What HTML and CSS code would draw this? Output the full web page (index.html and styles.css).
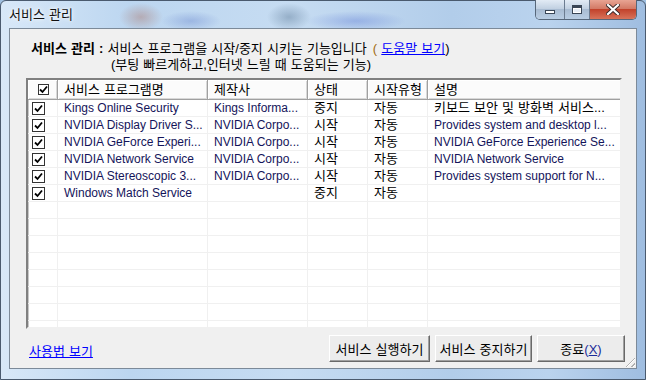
FILE: index.html
```html
<!DOCTYPE html>
<html lang="ko">
  <head>
    <meta charset="UTF-8" />
    <title>서비스 관리</title>
    <link rel="stylesheet" href="styles.css">
  </head>
  <body>
    <div class="window">
      <div class="titlebar">
        <span class="title">서비스 관리</span>
        <div class="caption">
          <span class="cap-btn cap-min"><i></i></span>
          <span class="cap-btn cap-max"><i></i></span>
          <span class="cap-btn cap-close">
            <svg width="14" height="11" viewBox="0 0 14 11">
              <path d="M2 1 L12 10 M12 1 L2 10" stroke="#3a2a2a" stroke-width="4" stroke-linecap="square" />
              <path d="M2 1 L12 10 M12 1 L2 10" stroke="#fff" stroke-width="2.2" stroke-linecap="square" />
            </svg>
          </span>
        </div>
      </div>

      <div class="client">
        <div class="intro">
          <p class="line"><b>서비스 관리 :</b> 서비스 프로그램을 시작/중지 시키는 기능입니다 <span class="paren">(</span> <a href="#">도움말 보기</a>)</p>
          <p class="line indent">(부팅 빠르게하고,인터넷 느릴 때 도움되는 기능)</p>
        </div>

        <div class="list">
          <table>
            <colgroup>
              <col class="c-check">
              <col class="c-name">
              <col class="c-maker">
              <col class="c-state">
              <col class="c-type">
              <col>
            </colgroup>
            <thead>
              <tr>
                <th class="check-cell"><span class="box box-head"><svg width="9" height="9" viewBox="0 0 9 9"><path d="M1 4.5 L3.5 7 L8 1.5" fill="none" stroke="#000" stroke-width="1.8" /></svg></span></th>
                <th>서비스 프로그램명</th>
                <th>제작사</th>
                <th>상태</th>
                <th>시작유형</th>
                <th>설명</th>
              </tr>
            </thead>
            <tbody>
              <tr>
                <td class="check-cell"><span class="box"><svg width="9" height="9" viewBox="0 0 9 9"><path d="M1 4.5 L3.5 7 L8 1.5" fill="none" stroke="#000" stroke-width="1.8" /></svg></span></td>
                <td>Kings Online Security</td>
                <td>Kings Informa...</td>
                <td class="ko">중지</td>
                <td class="ko">자동</td>
                <td class="ko">키보드 보안 및 방화벽 서비스...</td>
              </tr>
              <tr>
                <td class="check-cell"><span class="box"><svg width="9" height="9" viewBox="0 0 9 9"><path d="M1 4.5 L3.5 7 L8 1.5" fill="none" stroke="#000" stroke-width="1.8" /></svg></span></td>
                <td>NVIDIA Display Driver S...</td>
                <td>NVIDIA Corpo...</td>
                <td class="ko">시작</td>
                <td class="ko">자동</td>
                <td>Provides system and desktop l...</td>
              </tr>
              <tr>
                <td class="check-cell"><span class="box"><svg width="9" height="9" viewBox="0 0 9 9"><path d="M1 4.5 L3.5 7 L8 1.5" fill="none" stroke="#000" stroke-width="1.8" /></svg></span></td>
                <td>NVIDIA GeForce Experi...</td>
                <td>NVIDIA Corpo...</td>
                <td class="ko">시작</td>
                <td class="ko">자동</td>
                <td>NVIDIA GeForce Experience Se...</td>
              </tr>
              <tr>
                <td class="check-cell"><span class="box"><svg width="9" height="9" viewBox="0 0 9 9"><path d="M1 4.5 L3.5 7 L8 1.5" fill="none" stroke="#000" stroke-width="1.8" /></svg></span></td>
                <td>NVIDIA Network Service</td>
                <td>NVIDIA Corpo...</td>
                <td class="ko">시작</td>
                <td class="ko">자동</td>
                <td>NVIDIA Network Service</td>
              </tr>
              <tr>
                <td class="check-cell"><span class="box"><svg width="9" height="9" viewBox="0 0 9 9"><path d="M1 4.5 L3.5 7 L8 1.5" fill="none" stroke="#000" stroke-width="1.8" /></svg></span></td>
                <td>NVIDIA Stereoscopic 3...</td>
                <td>NVIDIA Corpo...</td>
                <td class="ko">시작</td>
                <td class="ko">자동</td>
                <td>Provides system support for N...</td>
              </tr>
              <tr>
                <td class="check-cell"><span class="box"><svg width="9" height="9" viewBox="0 0 9 9"><path d="M1 4.5 L3.5 7 L8 1.5" fill="none" stroke="#000" stroke-width="1.8" /></svg></span></td>
                <td>Windows Match Service</td>
                <td></td>
                <td class="ko">중지</td>
                <td class="ko">자동</td>
                <td></td>
              </tr>
              <tr class="empty"><td></td><td></td><td></td><td></td><td></td><td></td></tr>
              <tr class="empty"><td></td><td></td><td></td><td></td><td></td><td></td></tr>
              <tr class="empty"><td></td><td></td><td></td><td></td><td></td><td></td></tr>
              <tr class="empty"><td></td><td></td><td></td><td></td><td></td><td></td></tr>
              <tr class="empty"><td></td><td></td><td></td><td></td><td></td><td></td></tr>
              <tr class="empty"><td></td><td></td><td></td><td></td><td></td><td></td></tr>
              <tr class="empty"><td></td><td></td><td></td><td></td><td></td><td></td></tr>
              <tr class="empty"><td></td><td></td><td></td><td></td><td></td><td></td></tr>
            </tbody>
          </table>
        </div>

        <div class="footer">
          <a href="#" class="usage">사용법 보기</a>
          <div class="buttons">
            <button class="btn btn-run">서비스 실행하기</button>
            <button class="btn btn-stop">서비스 중지하기</button>
            <button class="btn btn-close">종료<span class="mnemonic">(<u>X</u>)</span></button>
          </div>
        </div>

        <span class="grip"></span>
      </div>
    </div>
  </body>
</html>
```

FILE: styles.css
```css
* {
    box-sizing: border-box;
}

body {
    margin: 0;
    width: 646px;
    height: 380px;
    overflow: hidden;
    font-family: "Liberation Sans", "Noto Sans CJK KR", sans-serif;
    font-size: 12px;
    color: #000;
    background: #9fbfe0;
}

.window {
    width: 646px;
    height: 380px;
    padding: 0 8px 10px 8px;
    border: 1px solid #4a5a6e;
    border-radius: 6px 6px 0 0;
    background:
        radial-gradient(ellipse 22px 14px at 140px 16px, rgba(170, 120, 110, 0.45), transparent),
        radial-gradient(ellipse 30px 10px at 190px 20px, rgba(90, 120, 200, 0.35), transparent),
        radial-gradient(ellipse 22px 14px at 288px 16px, rgba(90, 120, 150, 0.45), transparent),
        radial-gradient(ellipse 50px 10px at 355px 20px, rgba(80, 110, 210, 0.35), transparent),
        linear-gradient(to right, #d8e8f8 0%, #bcd6f0 20%, #c6dcf2 45%, #b2cdea 70%, #bad3ee 85%, #9fbde0 100%);
    display: flex;
    flex-direction: column;
}

.title,
.intro,
th,
td.ko,
.btn,
.usage {
    font-size: 13px;
    word-spacing: 0.5px;
}

/* title bar */
.titlebar {
    height: 27px;
    display: flex;
    justify-content: space-between;
    align-items: flex-start;
}

.title {
    line-height: 27px;
    color: #111;
    text-shadow: 0 0 6px #fff, 0 0 3px #fff;
}

.caption {
    display: flex;
    margin-top: -1px;
    border: 1px solid #57677a;
    border-top: none;
    border-radius: 0 0 5px 5px;
    overflow: hidden;
    box-shadow: inset 0 0 0 1px rgba(255, 255, 255, 0.5);
}

.cap-btn {
    height: 19px;
    display: flex;
    align-items: center;
    justify-content: center;
    background: linear-gradient(#e2ebf5, #c2d1e2 45%, #a9bcd2 50%, #b9cde3);
}

.cap-min {
    width: 29px;
    border-right: 1px solid #6c7c90;
}

.cap-min i {
    width: 10px;
    height: 4px;
    margin-top: 5px;
    background: #fff;
    border: 1px solid #3a4656;
}

.cap-max {
    width: 25px;
    border-right: 1px solid #6c7c90;
}

.cap-max i {
    width: 10px;
    height: 9px;
    border: 1px solid #3a4656;
    border-top-width: 3px;
    background: #e8eef6;
    box-shadow: inset 0 0 0 1px #fff;
}

.cap-close {
    width: 46px;
    background: linear-gradient(#e8a493, #d37a66 45%, #c2432c 50%, #d8735a);
}

/* client area */
.client {
    position: relative;
    flex: 1;
    background: #f0f0f0;
    border: 1px solid #7c8a99;
    display: flex;
    flex-direction: column;
}

.intro {
    padding: 12px 0 0 21px;
}

.line {
    margin: 0;
    line-height: 16px;
    white-space: nowrap;
}

.line b {
    font-weight: 700;
}

.indent {
    padding-left: 80px;
}

.paren {
    color: #a06a10;
    padding-left: 2px;
}

a {
    color: #0000ff;
    text-decoration: underline;
}

/* list view */
.list {
    margin: 5px 14px 0 16px;
    height: 251px;
    overflow: hidden;
    background: #fff;
    border: 2px solid;
    border-color: #808080 #f0f0f0 #f0f0f0 #808080;
    box-shadow: inset 1px 1px 0 #c8c8c8;
}

table {
    width: 594px;
    table-layout: fixed;
    border-collapse: separate;
    border-spacing: 0;
}

.c-check { width: 30px; }
.c-name { width: 150px; }
.c-maker { width: 100px; }
.c-state { width: 60px; }
.c-type { width: 60px; }

th {
    height: 20px;
    padding: 0 0 0 6px;
    font-weight: 400;
    text-align: left;
    white-space: nowrap;
    overflow: hidden;
    background: #fbfbfb;
    border-right: 1px solid #a0a0a0;
    border-bottom: 1px solid #a0a0a0;
    box-shadow: inset 1px 1px 0 #fff, inset -1px -1px 0 #d8d8d8;
    line-height: 16px;
}

td {
    height: 17px;
    padding: 0 0 0 6px;
    white-space: nowrap;
    overflow: hidden;
    border-right: 1px solid #f0f0f0;
    border-bottom: 1px solid #f0f0f0;
    color: #14145a;
    line-height: 16px;
}

td.ko {
    color: #000;
}

th.check-cell,
td.check-cell {
    padding: 0 0 0 4px;
}

th.check-cell {
    padding-left: 10px;
}

.box {
    display: flex;
    align-items: center;
    justify-content: center;
    width: 13px;
    height: 13px;
    background: #fff;
    border: 1px solid #333;
}

.box-head {
    width: 11px;
    height: 11px;
}

/* footer */
.footer {
    flex: 1;
    display: flex;
    justify-content: space-between;
    align-items: flex-start;
    padding: 6px 11px 0 19px;
}

.usage {
    margin-top: 9px;
    line-height: 16px;
}

.buttons {
    display: flex;
    gap: 5px;
}

.btn {
    height: 27px;
    padding: 0;
    font-family: "Liberation Sans", "Noto Sans CJK KR", sans-serif;
    color: #000;
    background: #ececec;
    border: 1px solid;
    border-color: #fff #696969 #696969 #fff;
    box-shadow: inset -1px -1px 0 #a0a0a0;
}

.btn-run { width: 101px; }
.btn-stop { width: 97px; }
.btn-close { width: 88px; }

.mnemonic {
    color: #1a2c9a;
}

.grip {
    position: absolute;
    right: 1px;
    bottom: 1px;
    width: 12px;
    height: 12px;
    background: repeating-linear-gradient(135deg, transparent 0 2px, #b0b0b0 2px 3px, #fff 3px 4px);
    clip-path: polygon(100% 0, 100% 100%, 0 100%);
}
```
